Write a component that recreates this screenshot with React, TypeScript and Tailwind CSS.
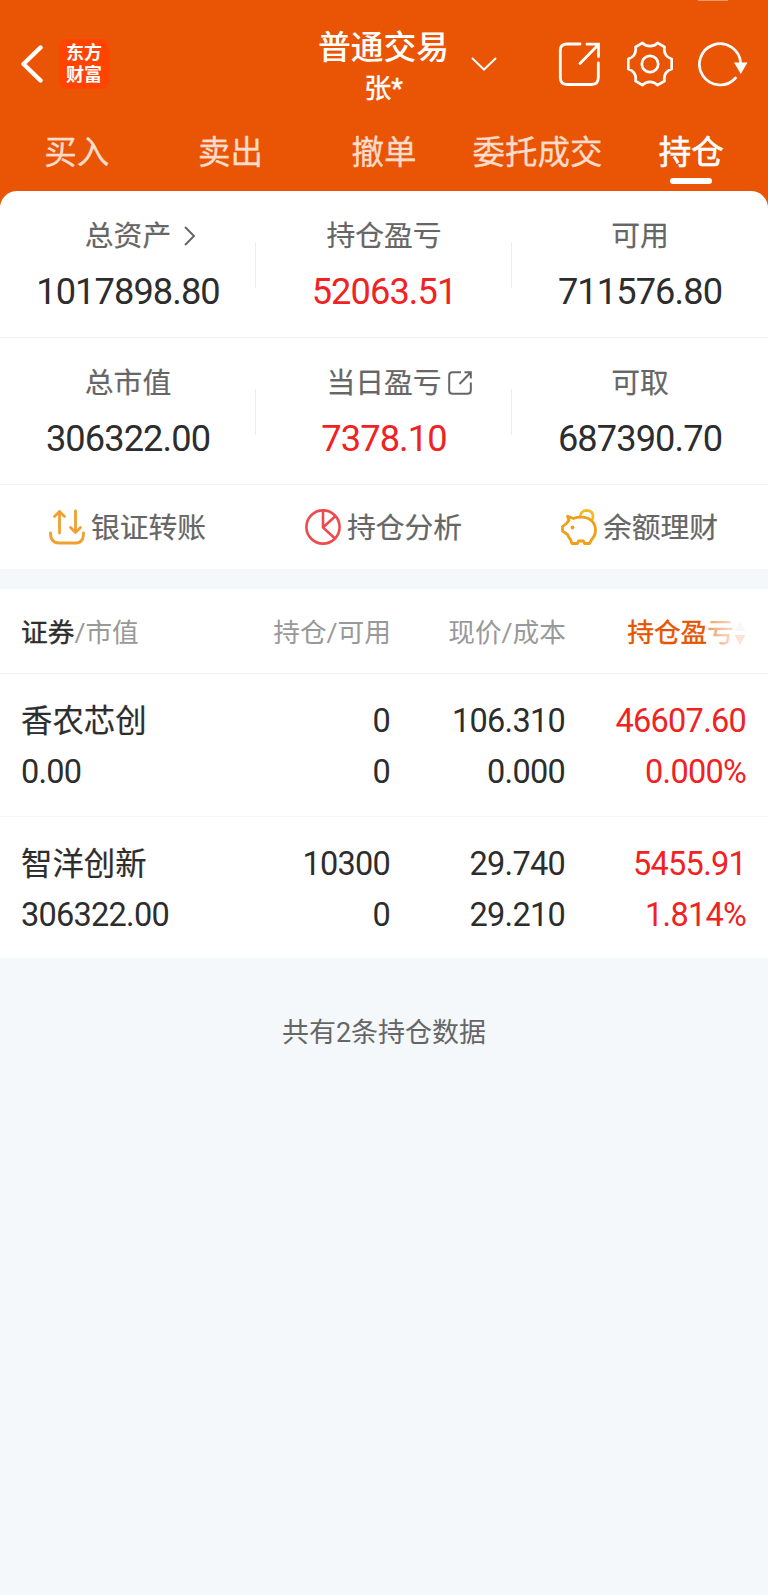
import React from "react";
import clsx from "clsx";

interface Metric {
  label: string;
  value: string;
  red?: boolean;
  icon?: React.ReactNode;
}

interface Holding {
  name: string;
  marketValue: string;
  amount: string;
  available: string;
  price: string;
  cost: string;
  profit: string;
  percent: string;
}

const tabs = ["买入", "卖出", "撤单", "委托成交", "持仓"];

const ChevronRight = () => (
  <svg className="w-[14px] h-[22px]" viewBox="0 0 14 22" fill="none" stroke="#666" strokeWidth="2">
    <path d="M2 2L11 11L2 20" />
  </svg>
);

const ShareSmall = () => (
  <svg className="w-6 h-6" viewBox="0 0 24 24" fill="none" stroke="#666" strokeWidth="2">
    <path d="M13 1.2H4.5Q1.2 1.2 1.2 4.5V19.5Q1.2 22.8 4.5 22.8H19.5Q22.8 22.8 22.8 19.5V11.5" />
    <path d="M11.5 13L22.5 1.8M16.5 1.2H22.8V7.5" />
  </svg>
);

const metricRows: Metric[][] = [
  [
    { label: "总资产", value: "1017898.80", icon: <ChevronRight /> },
    { label: "持仓盈亏", value: "52063.51", red: true },
    { label: "可用", value: "711576.80" },
  ],
  [
    { label: "总市值", value: "306322.00" },
    { label: "当日盈亏", value: "7378.10", red: true, icon: <ShareSmall /> },
    { label: "可取", value: "687390.70" },
  ],
];

const holdings: Holding[] = [
  {
    name: "香农芯创",
    marketValue: "0.00",
    amount: "0",
    available: "0",
    price: "106.310",
    cost: "0.000",
    profit: "46607.60",
    percent: "0.000%",
  },
  {
    name: "智洋创新",
    marketValue: "306322.00",
    amount: "10300",
    available: "0",
    price: "29.740",
    cost: "29.210",
    profit: "5455.91",
    percent: "1.814%",
  },
];

const TransferIcon = () => (
  <svg className="w-9 h-9" viewBox="0 0 36 36" fill="none" stroke="#f0a030" strokeWidth="2.8" strokeLinecap="round" strokeLinejoin="round">
    <path d="M10.5 24V2.5M5.5 7.5L10.5 2.5L15.5 7.5" />
    <path d="M26.5 2V23.5M21.5 18.5L26.5 23.5L31.5 18.5" />
    <path d="M1.5 24Q1.5 34 10 34H27Q34.5 34 34.5 24" />
  </svg>
);

const PieIcon = () => (
  <svg className="w-9 h-9" viewBox="0 0 36 36" fill="none" stroke="#ee4a4e" strokeWidth="2.6">
    <circle cx="18" cy="18" r="16.6" />
    <path d="M18 1.5V18.5L30 29.5M18 18.5L30.5 7" />
  </svg>
);

const PiggyIcon = () => (
  <svg className="w-9 h-9" viewBox="0 0 36 36" fill="none" stroke="#f0a018" strokeWidth="2.8" strokeLinejoin="round">
    <path d="M19 8Q20 1.4 26 1.4Q32.3 2 32 8Q31.8 10 30.8 11.5" stroke="#f3b922" strokeWidth="2.6" />
    <path d="M6.5 7.2L12.5 9.5Q15.5 8.2 20 8.2C29.5 8.2 34.5 14 34.5 21C34.5 26 32.5 28.5 31 30L28.5 34.5H23.5L22.5 32H17.5L16.5 34.5H11L9.5 30.5Q7.5 28.5 6.5 25.5L1.5 22V17.5L5.5 14.5Q6.5 13 8 11.5Z" />
    <circle cx="11.5" cy="18.5" r="1.9" fill="#f0a018" stroke="none" />
  </svg>
);

const actions = [
  { label: "银证转账", icon: <TransferIcon /> },
  { label: "持仓分析", icon: <PieIcon /> },
  { label: "余额理财", icon: <PiggyIcon /> },
];

const Header = () => (
  <header className="relative h-[191px] text-white">
    <span className="absolute top-0 left-[698px] w-[30px] h-px bg-white/40" />
    <div className="h-[128px] grid grid-cols-[1fr_auto_1fr]">
      <div className="flex items-center pl-[21px]">
        <svg className="w-[22px] h-[38px]" viewBox="0 0 22 38" fill="none" stroke="white" strokeWidth="4.4" strokeLinecap="round" strokeLinejoin="round">
          <path d="M19.5 2.5L2.5 19L19.5 35.5" />
        </svg>
        <div className="ml-[16px] w-[50px] h-[50px] rounded-lg bg-[#ff4400] flex flex-col items-center justify-center text-[18px] leading-[22px] font-bold">
          <span>东方</span>
          <span>财富</span>
        </div>
      </div>
      <div className="flex flex-col items-center pt-[28px] -ml-px">
        <h1 className="text-[32.8px] leading-[40px] font-medium">普通交易</h1>
        <p className="mt-px text-[27px] leading-[40px] [-webkit-text-stroke:0.4px_white]">张*</p>
      </div>
      <div className="flex items-center">
        <svg className="ml-[22px] w-[26px] h-[14px]" viewBox="0 0 26 14" fill="none" stroke="white" strokeWidth="2">
          <path d="M1 1L13 12.5L25 1" />
        </svg>
        <svg className="ml-[61px] w-[42px] h-[46px]" viewBox="0 0 42 46" fill="none" stroke="white" strokeWidth="2.8" strokeLinecap="round">
          <path d="M22 3H9Q2.3 3 2.3 9.5V36.5Q2.3 43.5 9 43.5H33.5Q40.3 43.5 40.3 36.5V22" />
          <path d="M22 22.5L40 4M29 3.2H40.5V15.5" />
        </svg>
        <svg className="ml-[27px] w-[46px] h-[46px]" viewBox="0 0 46 46" fill="none" stroke="white" strokeWidth="2.7" strokeLinejoin="round">
          <path d="M15.5 1.8Q18.5 5.2 23 5.2T30.500 1.800L37.500 6Q36 15 44.700 18V28Q36 31 37.500 40L30.500 44.200Q27.500 40.800 23 40.800T15.500 44.200L8.500 40Q10 31 1.300 28V18Q10 15 8.500 6Z" />
          <circle cx="23" cy="23" r="8.2" />
        </svg>
        <svg className="ml-[25px] w-[50px] h-[46px]" viewBox="0 0 50 46" fill="none" stroke="white" strokeWidth="2.7" strokeLinecap="round">
          <path d="M37.5 37A20.6 20.6 0 1 1 42.6 22" />
          <path d="M36 21.500H49.500L42.800 33Z" fill="white" stroke="none" />
        </svg>
      </div>
    </div>
    <nav className="grid grid-cols-5">
      {tabs.map((tab) => {
        const active = tab === "持仓";
        return (
          <div key={tab} className="flex flex-col items-center">
            <span
              className={clsx(
                "pt-px text-[32.5px] leading-[48px]",
                active ? "[-webkit-text-stroke:0.6px_white]" : "text-[#fddccb] [-webkit-text-stroke:0.3px_#fddccb]"
              )}
            >
              {tab}
            </span>
            {active && <span className="mt-px w-[42px] h-[6px] rounded-full bg-white" />}
          </div>
        );
      })}
    </nav>
  </header>
);

const MetricCell = ({ metric, divided }: { metric: Metric; divided: boolean }) => (
  <div className="relative flex flex-col items-center pt-[23px]">
    <div className="relative text-[28.8px] leading-[44px] text-[#666] [-webkit-text-stroke:0.2px_#666]">
      {metric.label}
      {metric.icon && (
        <span className={clsx("absolute left-full inset-y-0 flex items-center", metric.label === "总资产" ? "ml-[12px]" : "ml-[6px]")}>
          {metric.icon}
        </span>
      )}
    </div>
    <div className={clsx("mt-[12px] text-[36.2px] leading-[44px] tracking-[-0.9px]", metric.red ? "text-[#f02222]" : "text-[#2d2d2d]")}>
      {metric.value}
    </div>
    {divided && <span className="absolute right-0 top-[51px] w-px h-[46px] bg-[#eeeeee]" />}
  </div>
);

const Summary = () => (
  <section className="bg-white rounded-t-[17px] h-[378px]">
    {metricRows.map((row) => (
      <div key={row[0].label} className="grid grid-cols-3 h-[147px] border-b border-[#f2f3f4]">
        {row.map((metric, i) => (
          <MetricCell key={metric.label} metric={metric} divided={i < 2} />
        ))}
      </div>
    ))}
    <div className="grid grid-cols-3 h-[83px]">
      {actions.map((action) => (
        <div key={action.label} className="flex items-center justify-center gap-[6px] pr-px text-[28.8px] text-[#666] [-webkit-text-stroke:0.2px_#666]">
          {action.icon}
          <span className="pt-[4px]">{action.label}</span>
        </div>
      ))}
    </div>
  </section>
);

const HoldingRow = ({ item }: { item: Holding }) => (
  <div className="grid grid-cols-[194px_175px_175px_181px] pl-[21px] pt-[22px] h-[143px] last:h-[141px] text-right text-[32.5px] tracking-[-0.75px] leading-[51px] text-[#2d2d2d] border-b border-[#f4f5f6] last:border-b-0">
    <div className="text-left">
      <div className="text-[31.4px] tracking-normal leading-[51px] [-webkit-text-stroke:0.2px_#2d2d2d]">{item.name}</div>
      <div>{item.marketValue}</div>
    </div>
    <div>
      <div>{item.amount}</div>
      <div>{item.available}</div>
    </div>
    <div>
      <div>{item.price}</div>
      <div>{item.cost}</div>
    </div>
    <div className="text-[#f02222]">
      <div>{item.profit}</div>
      <div>{item.percent}</div>
    </div>
  </div>
);

const HoldingTable = () => (
  <section className="mt-5 bg-white">
    <div className="grid grid-cols-[195px_175px_175px_180px] items-center pl-[21px] pt-[4px] h-[85px] text-[26.7px] text-right text-[#999] border-b border-[#f2f3f4]">
      <div className="text-left">
        <span className="text-[#2d2d2d] [-webkit-text-stroke:0.4px_#2d2d2d]">证券</span>/市值
      </div>
      <div>持仓/可用</div>
      <div>现价/成本</div>
      <div className="relative flex items-center justify-end text-[#e65400] [-webkit-text-stroke:0.4px_#e65400]">
        <span>持仓盈亏</span>
        <svg className="w-[12px] h-[26px]" viewBox="0 0 12 26">
          <path d="M6 1L11.5 11H0.5Z" fill="#f7f7f7" />
          <path d="M6 25L11.5 15H0.5Z" fill="#fde3d6" />
        </svg>
        <span className="absolute right-[12px] inset-y-0 w-[28px] bg-linear-to-r from-white/40 to-white/80" />
      </div>
    </div>
    {holdings.map((item) => (
      <HoldingRow key={item.name} item={item} />
    ))}
  </section>
);

export default function App() {
  return (
    <div className="w-[768px] h-[1595px] overflow-hidden bg-[#f4f8fa] font-[Roboto,'Noto_Sans_CJK_SC',sans-serif]">
      <div className="bg-[#e95504]">
        <Header />
        <Summary />
      </div>
      <HoldingTable />
      <p className="mt-[55px] text-center text-[27px] leading-[40px] text-[#666]">共有2条持仓数据</p>
    </div>
  );
}
